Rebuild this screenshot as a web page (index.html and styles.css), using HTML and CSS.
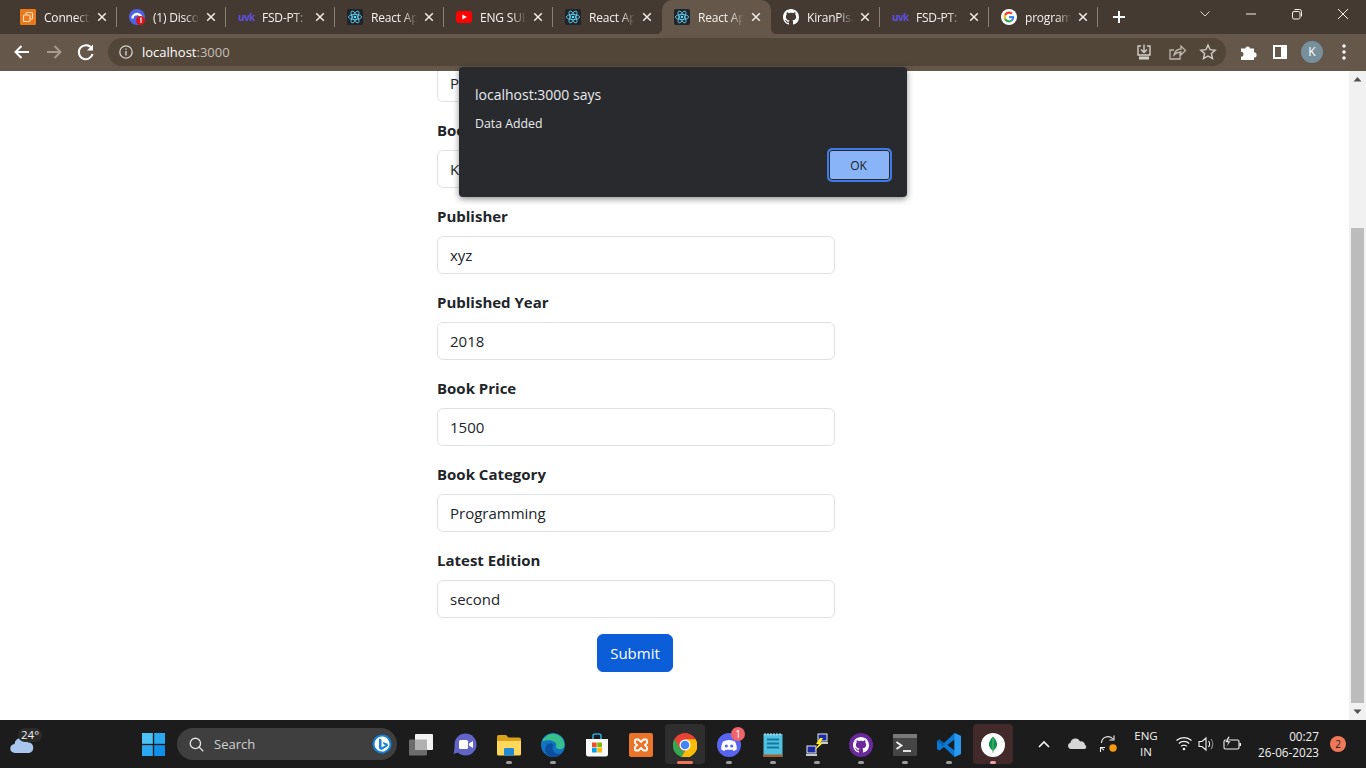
FILE: index.html
```html
<!DOCTYPE html>
<html lang="en">
<head>
  <meta charset="UTF-8">
  <meta name="viewport" content="width=device-width, initial-scale=1">
  <title>React App</title>
  <link rel="stylesheet" href="styles.css">
</head>
<body>

  <svg class="defs" width="0" height="0">
    <symbol id="react" viewBox="0 0 16 16">
      <rect width="16" height="16" rx="2" fill="#20232a"/>
      <g fill="none" stroke="#61dafb" stroke-width=".8">
        <ellipse cx="8" cy="8" rx="6.6" ry="2.6"/>
        <ellipse cx="8" cy="8" rx="6.6" ry="2.6" transform="rotate(60 8 8)"/>
        <ellipse cx="8" cy="8" rx="6.6" ry="2.6" transform="rotate(120 8 8)"/>
      </g>
      <circle cx="8" cy="8" r="1.3" fill="#61dafb"/>
    </symbol>
    <symbol id="github" viewBox="0 0 16 16">
      <path d="M8 0C3.58 0 0 3.58 0 8c0 3.54 2.29 6.53 5.47 7.59.4.07.55-.17.55-.38 0-.19-.01-.82-.01-1.49-2.01.37-2.53-.49-2.69-.94-.09-.23-.48-.94-.82-1.13-.28-.15-.68-.52-.01-.53.63-.01 1.08.58 1.23.82.72 1.21 1.87.87 2.33.66.07-.52.28-.87.51-1.07-1.78-.2-3.64-.89-3.64-3.95 0-.87.31-1.59.82-2.15-.08-.2-.36-1.02.08-2.12 0 0 .67-.21 2.2.82.64-.18 1.32-.27 2-.27.68 0 1.36.09 2 .27 1.53-1.04 2.2-.82 2.2-.82.44 1.1.16 1.92.08 2.12.51.56.82 1.27.82 2.15 0 3.07-1.87 3.75-3.65 3.95.29.25.54.73.54 1.48 0 1.07-.01 1.93-.01 2.2 0 .21.15.46.55.38A8.013 8.013 0 0016 8c0-4.42-3.58-8-8-8z"/>
    </symbol>
    <symbol id="close" viewBox="0 0 10 10">
      <path d="M1.2 1.2l7.6 7.6M8.8 1.2L1.2 8.8" fill="none" stroke="currentColor" stroke-width="1.5"/>
    </symbol>
  </svg>

  <!-- Tab strip -->
  <div class="tabstrip">
    <div class="tab sep">
      <svg class="favicon" viewBox="0 0 16 16"><rect width="16" height="16" rx="1" fill="#e8791d"/><rect x="6" y="3.5" width="6.5" height="6.5" rx="1" fill="none" stroke="#ffd9b0" stroke-width="1.2"/><rect x="3.5" y="6" width="6.5" height="6.5" rx="1" fill="#e8791d" stroke="#ffd9b0" stroke-width="1.2"/></svg>
      <span class="tab-title">Connect</span>
      <svg class="tab-close"><use href="#close"/></svg>
    </div>
    <div class="tab sep">
      <svg class="favicon" viewBox="0 0 16 16"><circle cx="8" cy="8" r="8" fill="#4f62e8"/><path d="M3.5 9.5a4.5 4.5 0 019 0" fill="none" stroke="#fff" stroke-width="2.4"/><circle cx="11.5" cy="11.5" r="4.5" fill="#d8141c"/><path d="M11 9.6l1-.6v5" fill="none" stroke="#fff" stroke-width="1.1"/></svg>
      <span class="tab-title">(1) Disco</span>
      <svg class="tab-close"><use href="#close"/></svg>
    </div>
    <div class="tab sep">
      <span class="favicon uvk">uvk</span>
      <span class="tab-title">FSD-PT:</span>
      <svg class="tab-close"><use href="#close"/></svg>
    </div>
    <div class="tab sep">
      <svg class="favicon"><use href="#react"/></svg>
      <span class="tab-title">React Ap</span>
      <svg class="tab-close"><use href="#close"/></svg>
    </div>
    <div class="tab sep">
      <svg class="favicon" viewBox="0 0 16 16"><rect y="2" width="16" height="12" rx="3" fill="#f00"/><path d="M6.4 5.4L10.8 8l-4.4 2.6z" fill="#fff"/></svg>
      <span class="tab-title">ENG SUB</span>
      <svg class="tab-close"><use href="#close"/></svg>
    </div>
    <div class="tab">
      <svg class="favicon"><use href="#react"/></svg>
      <span class="tab-title">React Ap</span>
      <svg class="tab-close"><use href="#close"/></svg>
    </div>
    <div class="tab tab-active">
      <svg class="favicon"><use href="#react"/></svg>
      <span class="tab-title">React Ap</span>
      <svg class="tab-close"><use href="#close"/></svg>
    </div>
    <div class="tab sep">
      <svg class="favicon favicon-white"><use href="#github"/></svg>
      <span class="tab-title">KiranPisa</span>
      <svg class="tab-close"><use href="#close"/></svg>
    </div>
    <div class="tab sep">
      <span class="favicon uvk">uvk</span>
      <span class="tab-title">FSD-PT:</span>
      <svg class="tab-close"><use href="#close"/></svg>
    </div>
    <div class="tab sep">
      <svg class="favicon" viewBox="0 0 16 16"><circle cx="8" cy="8" r="8" fill="#fff"/><g transform="translate(2.6 2.6) scale(.225)"><path fill="#EA4335" d="M24 9.5c3.54 0 6.71 1.22 9.21 3.6l6.85-6.85C35.9 2.38 30.47 0 24 0 14.62 0 6.51 5.38 2.56 13.22l7.98 6.19C12.43 13.72 17.74 9.5 24 9.5z"/><path fill="#4285F4" d="M46.98 24.55c0-1.57-.15-3.09-.38-4.55H24v9.02h12.94c-.58 2.96-2.26 5.48-4.78 7.18l7.73 6c4.51-4.18 7.09-10.36 7.09-17.65z"/><path fill="#FBBC05" d="M10.53 28.59c-.48-1.45-.76-2.99-.76-4.59s.27-3.14.76-4.59l-7.98-6.19C.92 16.46 0 20.12 0 24c0 3.88.92 7.54 2.56 10.78l7.97-6.19z"/><path fill="#34A853" d="M24 48c6.48 0 11.93-2.13 15.89-5.81l-7.73-6c-2.15 1.45-4.92 2.3-8.16 2.3-6.26 0-11.57-4.22-13.47-9.91l-7.98 6.19C6.51 42.62 14.62 48 24 48z"/></g></svg>
      <span class="tab-title">program</span>
      <svg class="tab-close"><use href="#close"/></svg>
    </div>
    <svg class="new-tab" viewBox="0 0 28 28"><path d="M14 8v12M8 14h12" stroke="#fff" stroke-width="2"/></svg>
    <div class="window-controls">
      <svg viewBox="0 0 46 28"><path d="M18.5 11.5l4.5 4.5 4.5-4.5" fill="none" stroke="#d8d4d0"/></svg>
      <svg viewBox="0 0 46 28"><path d="M18 14h10" stroke="#f4f0ec"/></svg>
      <svg viewBox="0 0 46 28"><rect x="18.5" y="11.5" width="7.5" height="7.5" rx="1.5" fill="none" stroke="#f4f0ec"/><path d="M20.5 9.5h5a2 2 0 012 2v5" fill="none" stroke="#f4f0ec"/></svg>
      <svg viewBox="0 0 46 28"><path d="M18 9l10 10M28 9L18 19" stroke="#f4f0ec"/></svg>
    </div>
  </div>

  <!-- Toolbar -->
  <div class="toolbar">
    <svg class="tool" viewBox="0 0 32 32"><path d="M23 16H10M15.5 10l-6 6 6 6" fill="none" stroke="#fff" stroke-width="2"/></svg>
    <svg class="tool" viewBox="0 0 32 32"><path d="M9 16h13M16.5 10l6 6-6 6" fill="none" stroke="#a79b90" stroke-width="2"/></svg>
    <svg class="tool" viewBox="0 0 32 32"><path d="M21.7 12.3A7 7 0 1022.6 18" fill="none" stroke="#fff" stroke-width="2"/><path d="M23 8.5v6h-6z" fill="#fff"/></svg>
    <div class="omnibox">
      <svg class="info" viewBox="0 0 16 16"><circle cx="8" cy="8" r="6.2" fill="none" stroke="#d8d2cc" stroke-width="1.3"/><path d="M8 7v4.500M8 4.500v1.300" stroke="#d8d2cc" stroke-width="1.4"/></svg>
      <span class="url">localhost<span class="url-port">:3000</span></span>
      <div class="omni-actions">
        <svg class="tool" viewBox="0 0 32 32"><path d="M13 10H10v9h12v-9h-3M16 8.500v8M13 13.500l3 3 3-3" fill="none" stroke="#d4cec8" stroke-width="1.4"/><rect x="11" y="20.500" width="10" height="3" fill="#d4cec8"/></svg>
        <svg class="tool" viewBox="0 0 32 32"><path d="M20 17v6H10v-9h4M14 19c1-4 3-6 7-6v-3l4.500 4.500L21 19v-3c-3 0-5 1-7 3z" fill="none" stroke="#bdb5ad" stroke-width="1.3"/></svg>
        <svg class="tool" viewBox="0 0 32 32"><path d="M16 9l2.100 4.700 5.100.5-3.800 3.400 1.100 5L16 20l-4.500 2.600 1.100-5-3.800-3.400 5.100-.5z" fill="none" stroke="#d4cec8" stroke-width="1.4"/></svg>
      </div>
    </div>
    <div class="tool-right">
      <svg class="tool" viewBox="0 0 32 32"><path d="M9 12.500h4.200a2.600 2.600 0 015 0H22v3.800a2.600 2.600 0 010 5.200V24H9v-3.200a2.500 2.500 0 000-5z" fill="#fff"/></svg>
      <svg class="tool" viewBox="0 0 32 32"><rect x="10" y="10" width="12" height="12" fill="none" stroke="#fff" stroke-width="2"/><rect x="17" y="10" width="5" height="12" fill="#fff"/></svg>
      <div class="tool avatar-slot"><span class="avatar">K</span></div>
      <svg class="tool" viewBox="0 0 32 32"><circle cx="16" cy="10" r="1.700" fill="#fff"/><circle cx="16" cy="16" r="1.700" fill="#fff"/><circle cx="16" cy="22" r="1.700" fill="#fff"/></svg>
    </div>
  </div>

  <!-- Page -->
  <div class="viewport">
    <div class="page">
      <form class="book-form">
        <div class="field">
          <label for="author">Book Name</label>
          <input type="text" id="author" value="Programming">
        </div>
        <div class="field">
          <label for="bookname">Book Author</label>
          <input type="text" id="bookname" value="Kiran">
        </div>
        <div class="field">
          <label for="publisher">Publisher</label>
          <input type="text" id="publisher" value="xyz">
        </div>
        <div class="field">
          <label for="year">Published Year</label>
          <input type="text" id="year" value="2018">
        </div>
        <div class="field">
          <label for="price">Book Price</label>
          <input type="text" id="price" value="1500">
        </div>
        <div class="field">
          <label for="category">Book Category</label>
          <input type="text" id="category" value="Programming">
        </div>
        <div class="field">
          <label for="edition">Latest Edition</label>
          <input type="text" id="edition" value="second">
        </div>
        <div class="submit-row">
          <button type="button" class="submit-btn">Submit</button>
        </div>
      </form>
    </div>
    <div class="scrollbar">
      <svg class="scroll-arrow" viewBox="0 0 17 17"><path d="M4.500 10.500L8.500 6l4 4.500z" fill="#505050"/></svg>
      <div class="scroll-track"><div class="scroll-thumb"></div></div>
      <svg class="scroll-arrow" viewBox="0 0 17 17"><path d="M4.500 6.500L8.500 11l4-4.500z" fill="#505050"/></svg>
    </div>
  </div>

  <!-- Alert dialog -->
  <div class="dialog">
    <div class="dialog-title">localhost:3000 says</div>
    <div class="dialog-msg">Data Added</div>
    <div class="dialog-actions">
      <button type="button" class="dialog-ok">OK</button>
    </div>
  </div>

  <!-- Taskbar -->
  <div class="taskbar">
    <div class="weather">
      <svg class="weather-icon" viewBox="0 0 24 20"><path d="M5 19a4.500 4.500 0 01-.5-9A7 7 0 0118 8.500 5.300 5.300 0 0119 19z" fill="#a9c6ee"/></svg>
      <span class="temp">24°</span>
    </div>
    <div class="start">
      <svg viewBox="0 0 24 24"><rect width="11.300" height="11.300" fill="#4cc2f5"/><rect x="12.700" width="11.300" height="11.300" fill="#2aa8f0"/><rect y="12.700" width="11.300" height="11.300" fill="#2aa8f0"/><rect x="12.700" y="12.700" width="11.300" height="11.300" fill="#0f8fe8"/></svg>
    </div>
    <div class="search">
      <svg class="search-icon" viewBox="0 0 16 16"><circle cx="6.800" cy="6.800" r="5.500" fill="none" stroke="#e4e4e4" stroke-width="1.400"/><path d="M10.800 10.800l4.400 4.400" stroke="#e4e4e4" stroke-width="1.400"/></svg>
      <span class="search-text">Search</span>
      <svg class="bing" viewBox="0 0 20 20"><path d="M10 .5a9.500 9.500 0 016 16.800L12 19.500H10A9.500 9.500 0 0110 .5z" fill="#1480d8"/><path d="M10 2.500a7.500 7.500 0 015 13L12 17.500H10A7.500 7.500 0 0110 2.500z" fill="#fff"/><path d="M7 4.500l2.500 1v8l4-2.300-1.800-.9-1-2.400 5 1.800v2.600L9.500 16 7 14.500z" fill="#1480d8"/></svg>
    </div>

    <div class="task">
      <div class="task-inner">
        <svg class="task-icon" viewBox="0 0 24 24"><rect x="0" y="6.500" width="18" height="16" rx="1" fill="#6c6c6c"/><rect x="6" y="1" width="18" height="16" rx="1" fill="#f2f2f2"/><rect x="6" y="6.500" width="12" height="10.500" fill="#b0b0b0"/></svg>
      </div>
    </div>
    <div class="task">
      <div class="task-inner">
        <svg class="task-icon" viewBox="0 0 24 24"><circle cx="12.500" cy="11.500" r="11" fill="#6264c8"/><path d="M2 13l-1.500 8 6-2z" fill="#6264c8"/><rect x="6" y="7" width="9" height="9" rx="1.500" fill="#fff"/><path d="M16 10.500l4-2.500v7l-4-2.500z" fill="#fff"/></svg>
      </div>
    </div>
    <div class="task">
      <div class="task-inner">
        <svg class="task-icon" viewBox="0 0 24 24"><path d="M0 3.500a1.500 1.500 0 011.500-1.500H9l2.500 2.500H22a2 2 0 012 2V10H0z" fill="#d9a21b"/><path d="M0 8h24v13a1.500 1.500 0 01-1.500 1.500h-21A1.500 1.500 0 010 21z" fill="#ffd75a"/><rect x="7" y="15" width="10" height="7.500" rx="1" fill="#1f8ad6"/></svg>
        <span class="dot"></span>
      </div>
    </div>
    <div class="task">
      <div class="task-inner">
        <svg class="task-icon" viewBox="0 0 24 24"><circle cx="12" cy="12" r="12" fill="#1273c4"/><path d="M1 9a11.500 11.500 0 0122.500 2c.5 4-3 6-6 5-3-.8-3-3-2-5-2-4-11-5-14.500-2z" fill="#36c08c"/><path d="M12 24C6 24 2.500 18 5 13c2-3.500 6-3.500 7.500-1-3 4 1 9.500 7 9-2 2-4.500 3-7.500 3z" fill="#0b4f9e"/></svg>
        <span class="dot"></span>
      </div>
    </div>
    <div class="task">
      <div class="task-inner">
        <svg class="task-icon" viewBox="0 0 24 24"><path d="M8 6V3a2 2 0 012-2h4a2 2 0 012 2v3" fill="none" stroke="#2ba7de" stroke-width="1.600"/><path d="M1 6h22v15a2.500 2.500 0 01-2.500 2.500h-17A2.500 2.500 0 011 21z" fill="#fafafa"/><rect x="7" y="9.500" width="4.700" height="4.700" fill="#f25022"/><rect x="12.300" y="9.500" width="4.700" height="4.700" fill="#7fba00"/><rect x="7" y="14.800" width="4.700" height="4.700" fill="#00a4ef"/><rect x="12.300" y="14.800" width="4.700" height="4.700" fill="#ffb900"/></svg>
      </div>
    </div>
    <div class="task">
      <div class="task-inner">
        <svg class="task-icon" viewBox="0 0 24 24"><rect width="24" height="24" rx="2" fill="#ea7428"/><path d="M7 6.500h2.500L12 9l2.500-2.500H17a1 1 0 011 1V10l-2 2 2 2v2.500a1 1 0 01-1 1h-2.500L12 15l-2.500 2.500H7a1 1 0 01-1-1V14l2-2-2-2V7.500a1 1 0 011-1z" fill="none" stroke="#fff" stroke-width="1.800"/></svg>
      </div>
    </div>
    <div class="task task-running">
      <div class="task-inner">
        <svg class="task-icon" viewBox="0 0 24 24"><circle cx="12" cy="12" r="12" fill="#ea4335"/><path d="M1.600 6.200L7 15.500a5.700 5.700 0 005 2.500L8.500 24A12 12 0 011.600 6.200z" fill="#34a853"/><path d="M12 6.300h10.500A12 12 0 018.500 24l5.700-9.300A5.700 5.700 0 0012 6.300z" fill="#fbbc05"/><circle cx="12" cy="12" r="5.500" fill="#fff"/><circle cx="12" cy="12" r="4.300" fill="#4285f4"/></svg>
        <span class="dot dot-chrome"></span>
      </div>
    </div>
    <div class="task">
      <div class="task-inner">
        <svg class="task-icon" viewBox="0 0 24 24"><circle cx="12" cy="12" r="12" fill="#5865f2"/><path d="M6 8.500c4-2 8-2 12 0 1.500 3 2 5.500 1.700 8-1.200.9-2.300 1.400-3.300 1.600l-.9-1.400H8.500l-.9 1.400c-1-.2-2.100-.7-3.300-1.600-.3-2.500.2-5 1.700-8z" fill="#fff"/><circle cx="9.300" cy="13" r="1.600" fill="#5865f2"/><circle cx="14.700" cy="13" r="1.600" fill="#5865f2"/></svg>
        <span class="task-badge">1</span>
        <span class="dot"></span>
      </div>
    </div>
    <div class="task">
      <div class="task-inner">
        <svg class="task-icon" viewBox="0 0 24 24"><rect x="2.500" y="1" width="19" height="23" fill="#50bfe0"/><rect x="2.500" y="21.500" width="19" height="2.500" fill="#a5622c"/><path d="M6 6.500h12M6 10.500h12M6 14.500h12" stroke="#127aa0" stroke-width="1.800"/><path d="M4 0v2.500M7 0v2.500M10 0v2.500M13 0v2.500M16 0v2.500M19 0v2.500" stroke="#cfeaf4"/></svg>
        <span class="dot"></span>
      </div>
    </div>
    <div class="task">
      <div class="task-inner">
        <svg class="task-icon" viewBox="0 0 24 24"><rect x="13" y="1" width="9" height="7" fill="#1a2ba8" stroke="#e8e8e8"/><rect x="12" y="9" width="11" height="2" fill="#c8c8c8"/><rect x="2" y="13" width="9" height="7" fill="#1a2ba8" stroke="#e8e8e8"/><rect x="1" y="21" width="11" height="2" fill="#c8c8c8"/><path d="M15 5l-4 6 3 0-5 7 9-8h-3l3-5z" fill="#ffee20"/></svg>
        <span class="dot"></span>
      </div>
    </div>
    <div class="task">
      <div class="task-inner">
        <svg class="task-icon" viewBox="0 0 24 24"><circle cx="12" cy="12" r="12" fill="#6a2a9c"/><svg x="4" y="4" width="16" height="16" class="gh-mark"><use href="#github"/></svg></svg>
        <span class="dot"></span>
      </div>
    </div>
    <div class="task">
      <div class="task-inner">
        <svg class="task-icon" viewBox="0 0 24 24"><rect y="1" width="24" height="22" rx="1" fill="#454545"/><rect y="1" width="24" height="4" fill="#7a7a7a"/><path d="M3.500 9l5 3.500-5 3.500" fill="none" stroke="#f2f2f2" stroke-width="1.800"/><path d="M10 18h8" stroke="#f2f2f2" stroke-width="1.800"/></svg>
        <span class="dot"></span>
      </div>
    </div>
    <div class="task">
      <div class="task-inner">
        <svg class="task-icon" viewBox="0 0 24 24"><path d="M17.500 0L24 3v18l-6.500 3L7 14 2.500 17.500 0 16V8l2.500-1.500L7 10z" fill="#0a78d4"/><path d="M17.500 6.500L10.500 12l7 5.500z" fill="#1c1c1c"/><path d="M17.500 0L24 3v18l-6.500 3z" fill="#2a9af0"/><path d="M0 8l2.500-1.500 5 4.500-2 2z" fill="#0862ae"/></svg>
        <span class="dot"></span>
      </div>
    </div>
    <div class="task task-mongo">
      <div class="task-inner">
        <svg class="task-icon" viewBox="0 0 24 24"><circle cx="12" cy="12" r="12" fill="#fff"/><path d="M12 3.500c3.500 3.500 4.500 6.500 4 9-.5 2.500-2.500 4-3.500 5l-.5 3-.5-3c-1-1-3-2.500-3.500-5-.5-2.500.5-5.500 4-9z" fill="#12924f"/><path d="M12 5v15" stroke="#8fd0a8" stroke-width=".6"/></svg>
        <span class="dot dot-mongo"></span>
      </div>
    </div>

    <div class="tray">
      <svg class="tray-slot" viewBox="0 0 32 48"><path d="M11 27l5-5 5 5" fill="none" stroke="#f0f0f0" stroke-width="1.700"/></svg>
      <svg class="tray-slot" viewBox="0 0 32 48"><path d="M11 29a3.200 3.200 0 01-.5-6.300 5 5 0 019.500-1.200 4 4 0 015 3.500 2.100 2.100 0 01-.3 4z" fill="#d6d6d6"/></svg>
      <svg class="tray-slot" viewBox="0 0 32 48"><path d="M9.500 23a6.500 6.500 0 0111.500-4M22.500 26a6.500 6.500 0 01-3 3M12 30a6.500 6.500 0 01-2.500-2" fill="none" stroke="#f0f0f0" stroke-width="1.100"/><path d="M22 15.500V20h-4.500M8.500 32v-4.500H13" fill="none" stroke="#f0f0f0" stroke-width="1.100"/><circle cx="21" cy="28" r="3.700" fill="#f79a12"/></svg>
      <div class="lang">ENG<br>IN</div>
      <svg class="wifi" viewBox="0 0 22 48"><path d="M3.500 20.500a11 11 0 0115 0M5.800 23.500a7.500 7.500 0 0110.400 0M8 26.400a4 4 0 016 0" fill="none" stroke="#f2f2f2" stroke-width="1.200"/><circle cx="11" cy="29" r="1.300" fill="#f2f2f2"/></svg>
      <svg class="wifi" viewBox="0 0 22 48"><path d="M4 21.500h3l4-3.500v12l-4-3.500H4z" fill="none" stroke="#f2f2f2" stroke-width="1.100"/><path d="M13.500 21c1.400 1.800 1.400 4.200 0 6" fill="none" stroke="#f2f2f2" stroke-width="1.100"/><path d="M16 19c2.200 3 2.200 7 0 10" fill="none" stroke="#8a8a8a" stroke-width="1.100"/></svg>
      <svg class="battery" viewBox="0 0 30 48"><rect x="7" y="20" width="15" height="9" rx="1.500" fill="none" stroke="#f2f2f2" stroke-width="1.100"/><rect x="22.500" y="23" width="1.500" height="3" fill="#f2f2f2"/><path d="M11 16.500l-3 6h3l-2 5 5-6.500h-3l2-4.500z" fill="#f2f2f2" stroke="#1c1c1c" stroke-width=".6"/></svg>
      <div class="clock">00:27<br>26-06-2023</div>
      <span class="notif">2</span>
    </div>
  </div>

</body>
</html>
```

FILE: styles.css
```css
* {
  box-sizing: border-box;
}
html, body {
  height: 100%;
}
body {
  margin: 0;
  width: 1366px;
  height: 768px;
  overflow: hidden;
  display: flex;
  flex-direction: column;
  position: relative;
  font-family: "Open Sans", "Noto Sans", sans-serif;
  color: #212529;
  background: #fff;
}
.defs {
  position: absolute;
}

/* tab strip */
.tabstrip {
  height: 34px;
  flex: none;
  display: flex;
  padding-left: 8px;
  background: #453a31;
}
.tab {
  position: relative;
  width: 109px;
  flex: none;
  display: flex;
  align-items: center;
  padding-left: 12px;
  color: #f5f1ed;
  font-size: 12px;
}
.tab.sep::after {
  content: "";
  position: absolute;
  right: 0;
  top: 7px;
  bottom: 7px;
  width: 1px;
  background: #8a7f75;
}
.tab-active {
  background: #65574a;
  border-radius: 10px 10px 0 0;
}
.tab-active::before {
  content: "";
  position: absolute;
  left: -6px;
  right: -6px;
  bottom: 0;
  height: 6px;
  background:
    radial-gradient(circle at 0 0, #453a31 6px, #65574a 6.5px) left / 6px 6px no-repeat,
    radial-gradient(circle at 100% 0, #453a31 6px, #65574a 6.5px) right / 6px 6px no-repeat;
}
.favicon {
  width: 16px;
  height: 16px;
  flex: none;
  margin-right: 8px;
  position: relative;
}
.favicon-white {
  fill: #fff;
}
.uvk {
  font-size: 10px;
  line-height: 16px;
  font-weight: 700;
  letter-spacing: -.6px;
  color: #5f4fe0;
}
.tab-title {
  width: 46px;
  flex: none;
  white-space: nowrap;
  letter-spacing: -.2px;
  -webkit-mask-image: linear-gradient(to right, #000 70%, transparent);
  mask-image: linear-gradient(to right, #000 70%, transparent);
}
.tab-close {
  width: 10px;
  height: 10px;
  flex: none;
  margin-left: 7px;
  color: #f0ece8;
}
.new-tab {
  width: 28px;
  height: 34px;
  flex: none;
  margin-left: 7px;
}
.window-controls {
  margin-left: auto;
  display: flex;
  align-items: flex-start;
}
.window-controls svg {
  width: 46px;
  height: 28px;
}

/* toolbar */
.toolbar {
  height: 37px;
  flex: none;
  display: flex;
  align-items: center;
  padding: 0 0 1px 6px;
  background: #65574a;
}
.tool {
  width: 32px;
  height: 32px;
  flex: none;
}
.omnibox {
  width: 1118px;
  height: 28px;
  margin-left: 6px;
  padding: 0 2px 0 10px;
  display: flex;
  align-items: center;
  background: #524639;
  border-radius: 14px;
}
.info {
  width: 16px;
  height: 16px;
  margin-right: 8px;
}
.url {
  font-size: 13px;
  color: #fff;
}
.url-port {
  color: #c6beb6;
}
.omni-actions {
  margin-left: auto;
  display: flex;
}
.tool-right {
  margin-left: 6px;
  display: flex;
}
.avatar-slot {
  display: flex;
  align-items: center;
  justify-content: center;
}
.avatar {
  width: 22px;
  height: 22px;
  border-radius: 50%;
  background: #78909c;
  color: #fff;
  font-size: 12px;
  line-height: 22px;
  text-align: center;
}

/* page */
.viewport {
  height: 649px;
  flex: none;
  display: flex;
  overflow: hidden;
}
.page {
  flex: 1;
  padding-left: 437px;
  overflow: hidden;
}
.book-form {
  width: 398px;
  margin-top: -39px;
}
.field {
  margin-bottom: 16px;
}
.field label {
  display: block;
  height: 24px;
  margin-bottom: 8px;
  font-size: 15px;
  line-height: 24px;
  font-weight: 700;
}
.field input {
  display: block;
  width: 100%;
  height: 38px;
  padding: 6px 12px;
  font: inherit;
  font-size: 15px;
  color: #212529;
  background: #fff;
  border: 1px solid #dee2e6;
  border-radius: 6px;
}
.submit-row {
  display: flex;
  justify-content: center;
  padding-right: 2px;
}
.submit-btn {
  width: 76px;
  height: 38px;
  font: inherit;
  font-size: 15px;
  color: #fff;
  background: #0b5ed7;
  border: 1px solid #0b5ed7;
  border-radius: 6px;
}
.scrollbar {
  width: 17px;
  flex: none;
  display: flex;
  flex-direction: column;
  background: #f1f1f1;
}
.scroll-arrow {
  width: 17px;
  height: 17px;
  flex: none;
}
.scroll-track {
  flex: 1;
  padding: 140px 2px 0;
}
.scroll-thumb {
  height: 475px;
  background: #bcbcbc;
}

/* alert */
.dialog {
  position: absolute;
  left: 459px;
  top: 67px;
  width: 448px;
  height: 130px;
  padding: 18px 15px 15px 16px;
  background: #292a2d;
  border-radius: 4px;
  box-shadow: 0 2px 6px rgba(0, 0, 0, .45);
  color: #e8eaed;
}
.dialog-title {
  font-size: 14px;
  line-height: 20px;
}
.dialog-msg {
  margin-top: 10px;
  font-size: 12.3px;
  line-height: 18px;
}
.dialog-actions {
  margin-top: 15px;
  display: flex;
  justify-content: flex-end;
}
.dialog-ok {
  width: 65px;
  height: 34px;
  padding: 0 2px 0 0;
  font: inherit;
  font-size: 12px;
  color: #202124;
  background: #8ab4f8;
  border: 2px solid #3f7be6;
  border-radius: 5px;
  box-shadow: inset 0 0 0 1px #292a2d;
}

/* taskbar */
.taskbar {
  height: 48px;
  flex: none;
  display: flex;
  background: #1c1c1c;
  color: #f2f2f2;
}
.weather {
  width: 131px;
  flex: none;
  display: flex;
  padding: 10px 0 0 10px;
  position: relative;
}
.weather-icon {
  width: 24px;
  height: 20px;
  margin-top: 4px;
}
.temp {
  position: absolute;
  left: 18px;
  top: 8px;
  padding: 0 3px;
  font-size: 11.5px;
  line-height: 14px;
  border-radius: 7px;
  background: #2a2a2a;
}
.start {
  width: 44px;
  flex: none;
  display: flex;
  align-items: center;
  justify-content: center;
}
.start svg {
  width: 23px;
  height: 23px;
}
.search {
  width: 220px;
  height: 32px;
  flex: none;
  margin: 8px 2px 0;
  padding: 0 5px 0 12px;
  display: flex;
  align-items: center;
  background: #3f3f3f;
  border-radius: 16px;
}
.search-icon {
  width: 15px;
  height: 15px;
  margin-right: 10px;
}
.search-text {
  font-size: 13px;
  color: #d0d0d0;
}
.bing {
  width: 20px;
  height: 20px;
  margin-left: auto;
}
.task {
  width: 44px;
  height: 48px;
  flex: none;
  padding: 4px 2px;
}
.task-inner {
  position: relative;
  height: 40px;
  display: flex;
  flex-direction: column;
  align-items: center;
  padding-top: 9px;
  border-radius: 4px;
}
.task-icon {
  width: 24px;
  height: 24px;
  flex: none;
}
.gh-mark {
  fill: #fff;
}
.dot {
  width: 6px;
  height: 3px;
  margin-top: 4px;
  border-radius: 2px;
  background: #9b9b9b;
}
.task-running .task-inner {
  background: #2e2e2e;
}
.dot-chrome {
  width: 16px;
  background: #f0745c;
}
.task-mongo .task-inner {
  background: #432a2a;
}
.dot-mongo {
  background: #f0a0a8;
}
.task-badge {
  position: absolute;
  left: 22px;
  top: 3px;
  width: 14px;
  height: 14px;
  border-radius: 50%;
  background: #f0646c;
  color: #fff;
  font-size: 10px;
  line-height: 14px;
  text-align: center;
}
.tray {
  margin-left: 13px;
  display: flex;
  align-items: center;
}
.tray-slot {
  width: 32px;
  height: 48px;
  flex: none;
}
.lang {
  width: 44px;
  margin-right: 5px;
  font-size: 11.5px;
  line-height: 16px;
  text-align: center;
}
.wifi {
  width: 22px;
  height: 48px;
  flex: none;
}
.battery {
  width: 30px;
  height: 48px;
  flex: none;
}
.clock {
  width: 72px;
  font-size: 11.7px;
  line-height: 16px;
  text-align: right;
}
.notif {
  width: 16px;
  height: 16px;
  margin-left: 11px;
  border-radius: 50%;
  background: #f0785a;
  color: #1c1c1c;
  font-size: 10px;
  line-height: 16px;
  text-align: center;
}
```
